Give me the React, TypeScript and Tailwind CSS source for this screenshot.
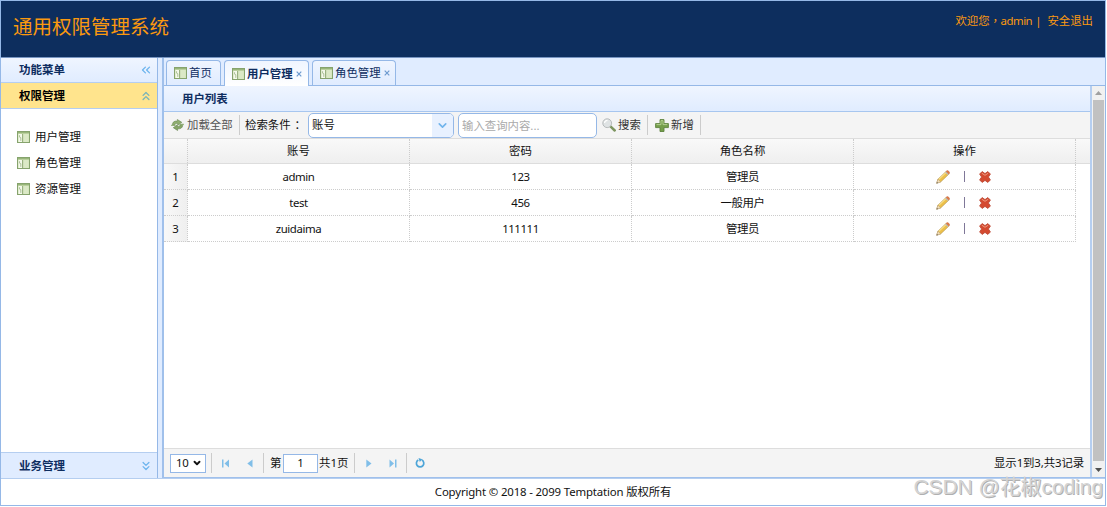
import type { ReactNode } from 'react';
import { ChevronDown, ChevronsDown, ChevronsLeft, ChevronsUp } from 'lucide-react';

const users = [
  { account: 'admin', password: '123', role: '管理员' },
  { account: 'test', password: '456', role: '一般用户' },
  { account: 'zuidaima', password: '111111', role: '管理员' },
];

const menus = ['用户管理', '角色管理', '资源管理'];

function LayoutIcon() {
  return (
    <svg width="13" height="12" viewBox="0 0 13 12" className="shrink-0">
      <rect x="0.5" y="0.5" width="12" height="11" fill="#cfe0b5" stroke="#86a36d" />
      <path d="M1 1.7h11" stroke="#98b67a" strokeWidth="1.4" />
      <rect x="1.5" y="3" width="3.5" height="8" fill="#f5faec" />
      <rect x="6.3" y="3" width="5.3" height="8" fill="#dbe9c6" />
      <path d="M5.6 3v8" stroke="#94ae7c" />
      <path d="M2.6 4.2v2l1.2.5v3.2" stroke="#9bb384" strokeWidth="0.8" fill="none" />
    </svg>
  );
}

function ReloadIcon() {
  return (
    <svg width="13" height="12" viewBox="0 0 13 12" className="shrink-0">
      <path d="M1.5 6.2C1.2 3 3.5 1.6 6.3 2.2V.5L10.8 3.3 6.8 6.2V4.5C5 4.1 3.9 4.7 3.8 6.2z" fill="#8fae70" stroke="#6b8a55" strokeWidth="0.6" />
      <path d="M11.7 5.4c.3 3.3-2.2 4.8-5.1 4.3v1.8L2.3 8.7l4-2.9v1.7c1.8.2 2.7-.6 2.900-2.100z" fill="#86a667" stroke="#64834e" strokeWidth="0.6" />
      <path d="M0 6.3h4.5M8.5 5.3h4.5" stroke="#8fad75" />
    </svg>
  );
}

function SearchIcon() {
  return (
    <svg width="14" height="14" viewBox="0 0 14 14" className="shrink-0">
      <path d="M8.7 8.7l4 3.8" stroke="#7d9560" strokeWidth="2.5" strokeLinecap="round" />
      <circle cx="5.2" cy="5.2" r="4.4" fill="#dfe3e4" stroke="#b6babb" />
      <path d="M2.5 5c.2-1.7 1.3-2.5 3-2.6" stroke="#fff" strokeWidth="1.2" fill="none" />
    </svg>
  );
}

function AddIcon() {
  return (
    <svg width="14" height="13" viewBox="0 0 14 13" className="shrink-0">
      <path d="M5 .6h4v4h4.4v4H9v3.9H5V8.6H.6v-4H5z" fill="#759e4b" stroke="#5d823e" strokeWidth="0.9" strokeLinejoin="round" />
      <path d="M1.5 5.6H6v-4h2v4h4.3" stroke="#b3ce90" fill="none" />
    </svg>
  );
}

function PencilIcon() {
  return (
    <svg width="14" height="14" viewBox="0 0 14 14">
      <path d="M.7 13.2l1.2-4L10 1.5l2.8 2.7-8.1 7.7z" fill="#ecc04a" stroke="#b39558" strokeWidth="0.6" />
      <path d="M2.8 9.3l7.4-7" stroke="#f8e08c" strokeWidth="1.1" />
      <path d="M.7 13.2l1.2-4 2.8 2.7z" fill="#f2dfbd" stroke="#b59a75" strokeWidth="0.5" />
      <path d="M.6 13.4l.4-1.5 1 1z" fill="#555" />
      <path d="M9.1 2.4l1-1L12.9 4.1l-1 1z" fill="#b9bec4" />
      <path d="M10.1 1.4l.8-.7c.9-.6 3.1 1.3 2.7 2.5l-.8.9z" fill="#e07a46" stroke="#c96a40" strokeWidth="0.5" />
    </svg>
  );
}

function DeleteIcon() {
  return (
    <svg width="12" height="12" viewBox="0 0 12 12">
      <path d="M3.1.6L6 2.6 8.9.6l2.500 2.500L9.400 6l2 2.900-2.500 2.500L6 9.400l-2.900 2L.6 8.900 2.600 6 .6 3.100z" fill="#d44a30" stroke="#bd4c38" strokeWidth="0.9" strokeLinejoin="round" />
      <path d="M2.8 2.200L6 4.300l3.200-2.100" stroke="#ee9a80" fill="none" />
    </svg>
  );
}

function Tab({ title, active, closable, className }: { title: string; active?: boolean; closable?: boolean; className: string }) {
  return (
    <div
      className={`flex items-center rounded-t-[4px] border border-b-0 border-[#95b8e7] pl-[7px] ${className} ${
        active ? 'h-[26px] bg-linear-to-b from-[#eff5ff] to-white font-bold' : 'h-[25px] bg-linear-to-b from-[#eff5ff] to-[#e0ecff]'
      }`}
    >
      <LayoutIcon />
      <span className="ml-[2px] text-[#0e2d5f]">{title}</span>
      {closable && (
        <svg width="6" height="6" viewBox="0 0 6 6" className="ml-[3px]">
          <path d="M.7.7l4.6 4.6M5.3.7L.7 5.3" stroke="#6d9bd0" strokeWidth="1.2" />
        </svg>
      )}
    </div>
  );
}

function Separator({ className = '' }: { className?: string }) {
  return <div className={`h-5 w-px shrink-0 bg-[#ccc] ${className}`} />;
}

function HeaderCell({ children }: { children: ReactNode }) {
  return <div className="flex w-[222px] shrink-0 items-center justify-center border-r border-dotted border-[#ccc]">{children}</div>;
}

function Cell({ children }: { children: ReactNode }) {
  return (
    <div className="flex w-[222px] shrink-0 items-center justify-center border-r border-b border-dotted border-[#ccc] tracking-[-0.4px]">
      {children}
    </div>
  );
}

function Sidebar() {
  return (
    <aside className="flex w-[157px] shrink-0 flex-col border-r border-[#95b8e7] bg-white text-[11.5px]">
      <div className="flex h-[25px] items-center justify-between border-b border-[#b5cef0] bg-linear-to-b from-[#eff5ff] to-[#e0ecff] pr-[4px] pl-[18px] font-bold text-[#0e2d5f]">
        功能菜单
        <ChevronsLeft size={14} strokeWidth={2.2} className="text-[#6cb4ee]" />
      </div>
      <div className="flex h-[26px] items-center justify-between border-b border-[#b5cef0] bg-[#ffe48d] pr-[4px] pl-[18px] font-bold text-black">
        权限管理
        <ChevronsUp size={14} strokeWidth={2.2} className="text-[#77b3ba]" />
      </div>
      <div className="flex-1 pt-[15px] pl-[16px]">
        {menus.map((m) => (
          <div key={m} className="flex h-[26px] items-center gap-[5px]">
            <LayoutIcon />
            <span>{m}</span>
          </div>
        ))}
      </div>
      <div className="flex h-[26px] items-center justify-between border-t border-[#b5cef0] bg-[#e0ecff] pr-[4px] pl-[18px] font-bold text-[#0e2d5f]">
        业务管理
        <ChevronsDown size={14} strokeWidth={2.2} className="text-[#6cb4ee]" />
      </div>
    </aside>
  );
}

function Toolbar() {
  return (
    <div className="flex h-[26px] shrink-0 items-center bg-[#f4f4f4] pl-[7px]">
      <ReloadIcon />
      <span className="ml-[3px] w-[46px] text-[#555]">加载全部</span>
      <Separator className="ml-[6px]" />
      <span className="ml-[5px] w-[63px] whitespace-nowrap">
        检索条件<span className="ml-[4px]">：</span>
      </span>
      <div className="flex h-[25px] w-[146px] overflow-hidden rounded-[5px] border border-[#95b8e7] bg-white">
        <span className="flex-1 self-center pl-[3px]">账号</span>
        <span className="flex w-[21px] items-center justify-center bg-[#e8f1ff]">
          <ChevronDown size={13} strokeWidth={3} className="text-[#71b5ec]" />
        </span>
      </div>
      <input
        placeholder="输入查询内容..."
        className="ml-[4px] h-[25px] w-[139px] rounded-[5px] border border-[#95b8e7] bg-white px-[3px] placeholder:text-[#aaa]"
      />
      <span className="ml-[5px]"><SearchIcon /></span>
      <span className="ml-[2px] w-[23px] whitespace-nowrap text-[#333]">搜索</span>
      <Separator className="ml-[6px]" />
      <span className="ml-[7px]"><AddIcon /></span>
      <span className="ml-[2px] w-[23px] whitespace-nowrap text-[#333]">新增</span>
      <Separator className="ml-[6px]" />
    </div>
  );
}

function UserGrid() {
  return (
    <div className="flex-1 bg-white">
      <div className="flex h-[26px] border-t border-b border-[#ddd] bg-linear-to-b from-[#f9f9f9] to-[#efefef]">
        <div className="w-[24px] shrink-0 border-r border-dotted border-[#ccc]" />
        <HeaderCell>账号</HeaderCell>
        <HeaderCell>密码</HeaderCell>
        <HeaderCell>角色名称</HeaderCell>
        <HeaderCell>操作</HeaderCell>
      </div>
      {users.map((user, i) => (
        <div key={user.account} className="flex h-[26px]">
          <div className="flex w-[24px] shrink-0 items-center justify-center border-r border-b border-dotted border-[#ccc] bg-linear-to-r from-[#f8f8f8] to-[#efefef]">
            {i + 1}
          </div>
          <Cell>{user.account}</Cell>
          <Cell>{user.password}</Cell>
          <Cell>{user.role}</Cell>
          <Cell>
            <PencilIcon />
            <span className="mx-[14px] h-[11px] w-px bg-[#7f7798]" />
            <DeleteIcon />
            <span className="w-[2px]" />
          </Cell>
        </div>
      ))}
    </div>
  );
}

function Pager() {
  return (
    <div className="flex h-[29px] shrink-0 items-center border-t border-[#ddd] bg-[#f4f4f4] pl-[6px]">
      <div className="flex h-[19px] w-[36px] items-center justify-between border border-[#95b8e7] bg-white pr-[3px] pl-[5px] tracking-[-0.3px]">
        10
        <ChevronDown size={10} strokeWidth={4.5} />
      </div>
      <Separator className="ml-[5px]" />
      <svg width="8" height="9" viewBox="0 0 8 9" className="ml-[10px] fill-[#80bee8]">
        <path d="M0 .5h1.5v8H0zM7 .5v8L2.5 4.5z" />
      </svg>
      <svg width="6" height="9" viewBox="0 0 6 9" className="ml-[17px] fill-[#80bee8]">
        <path d="M5.5.5v8L.3 4.5z" />
      </svg>
      <Separator className="ml-[10px]" />
      <span className="ml-[6px] w-[13px]">第</span>
      <div className="flex h-[19px] w-[35px] items-center justify-center border border-[#95b8e7] bg-white">1</div>
      <span className="ml-[1px] w-[30px] whitespace-nowrap">共1页</span>
      <Separator className="ml-[5px]" />
      <svg width="6" height="9" viewBox="0 0 6 9" className="ml-[11px] fill-[#80bee8]">
        <path d="M.3.5v8l5.200-4z" />
      </svg>
      <svg width="8" height="9" viewBox="0 0 8 9" className="ml-[17px] fill-[#80bee8]">
        <path d="M.5.5v8L5 4.5zM6 .5h1.5v8H6z" />
      </svg>
      <Separator className="ml-[9px]" />
      <svg width="10" height="10" viewBox="0 0 10 10" className="ml-[8px]" fill="none">
        <path d="M3.3 2A3.700 3.700 0 1 0 6.9 2" stroke="#4da5d8" strokeWidth="1.7" />
        <path d="M3.5 0l3.8 1.3-2.5 2.8z" fill="#4da5d8" />
      </svg>
      <span className="mr-[6px] ml-auto tracking-[-0.1px]">显示1到3,共3记录</span>
    </div>
  );
}

export default function App() {
  return (
    <div className="h-[507px] w-[1107px] bg-white pr-px font-['Noto_Sans','Noto_Sans_CJK_SC',sans-serif] text-[11.4px] leading-none text-[#111]">
      <div className="relative flex h-[506px] flex-col border border-[#95b8e7]">
        <header className="flex h-[57px] shrink-0 justify-between border-b border-[#7795c2] bg-[#0d2e5e] text-[#fb990f]">
          <h1 className="mt-[16px] ml-[12px] text-[19.5px]">通用权限管理系统</h1>
          <div className="mt-[14px] mr-[12px] flex whitespace-pre">
            <span>欢迎您</span>
            <span className="w-[11px] font-['Noto_Sans_CJK_TC',sans-serif]" lang="zh-TW">，</span>
            <span className="tracking-[-0.5px]">admin</span>
            <span className="mr-[6px] ml-[3px]">|</span>
            <span>安全退出</span>
          </div>
        </header>

        <div className="flex h-[421px] shrink-0 border-b border-[#b5cef0] bg-[#e0ecff]">
          <Sidebar />
          <main className="ml-[4px] flex flex-1 flex-col border-b border-l-2 border-[#a0c0eb]">
            <div className="flex h-[28px] shrink-0 items-end border-b border-[#95b8e7] pl-[2px]">
              <Tab title="首页" className="w-[55px]" />
              <Tab title="用户管理" active closable className="-mb-px ml-[3px] w-[85px]" />
              <Tab title="角色管理" closable className="ml-[3px] w-[84px]" />
            </div>
            <div className="flex min-h-0 flex-1">
              <div className="flex flex-1 flex-col border-r-2 border-[#b5cef0]">
                <div className="flex h-[26px] shrink-0 items-center border-b border-[#a7c6ef] bg-linear-to-b from-[#eff5ff] to-[#e0ecff] pl-[18px] font-bold text-[#0e2d5f]">
                  用户列表
                </div>
                <Toolbar />
                <UserGrid />
                <Pager />
              </div>
              <div className="flex w-[13px] flex-col items-center bg-[#f1f1f1]">
                <svg width="7" height="4" viewBox="0 0 7 4" className="my-[5px] shrink-0">
                  <path d="M3.5 0L7 4H0z" fill="#a0a0a0" />
                </svg>
                <div className="w-[11px] flex-1 bg-[#c1c1c1]" />
                <svg width="7" height="4" viewBox="0 0 7 4" className="mt-[7px] mb-[5px] shrink-0">
                  <path d="M0 0h7L3.5 4z" fill="#505050" />
                </svg>
              </div>
            </div>
          </main>
        </div>

        <footer className="flex flex-1 items-center justify-center">
          <span className="tracking-[-0.15px]">Copyright © 2018 - 2099 Temptation 版权所有</span>
        </footer>
        <div className="absolute right-[2px] bottom-[7px] font-['Liberation_Sans','Noto_Sans_CJK_SC',sans-serif] text-[20.9px] leading-[22px] whitespace-nowrap text-[#d4d4d4] [text-shadow:1px_1px_0_#b0b0b0]">
          CSDN @花椒coding
        </div>
      </div>
    </div>
  );
}
